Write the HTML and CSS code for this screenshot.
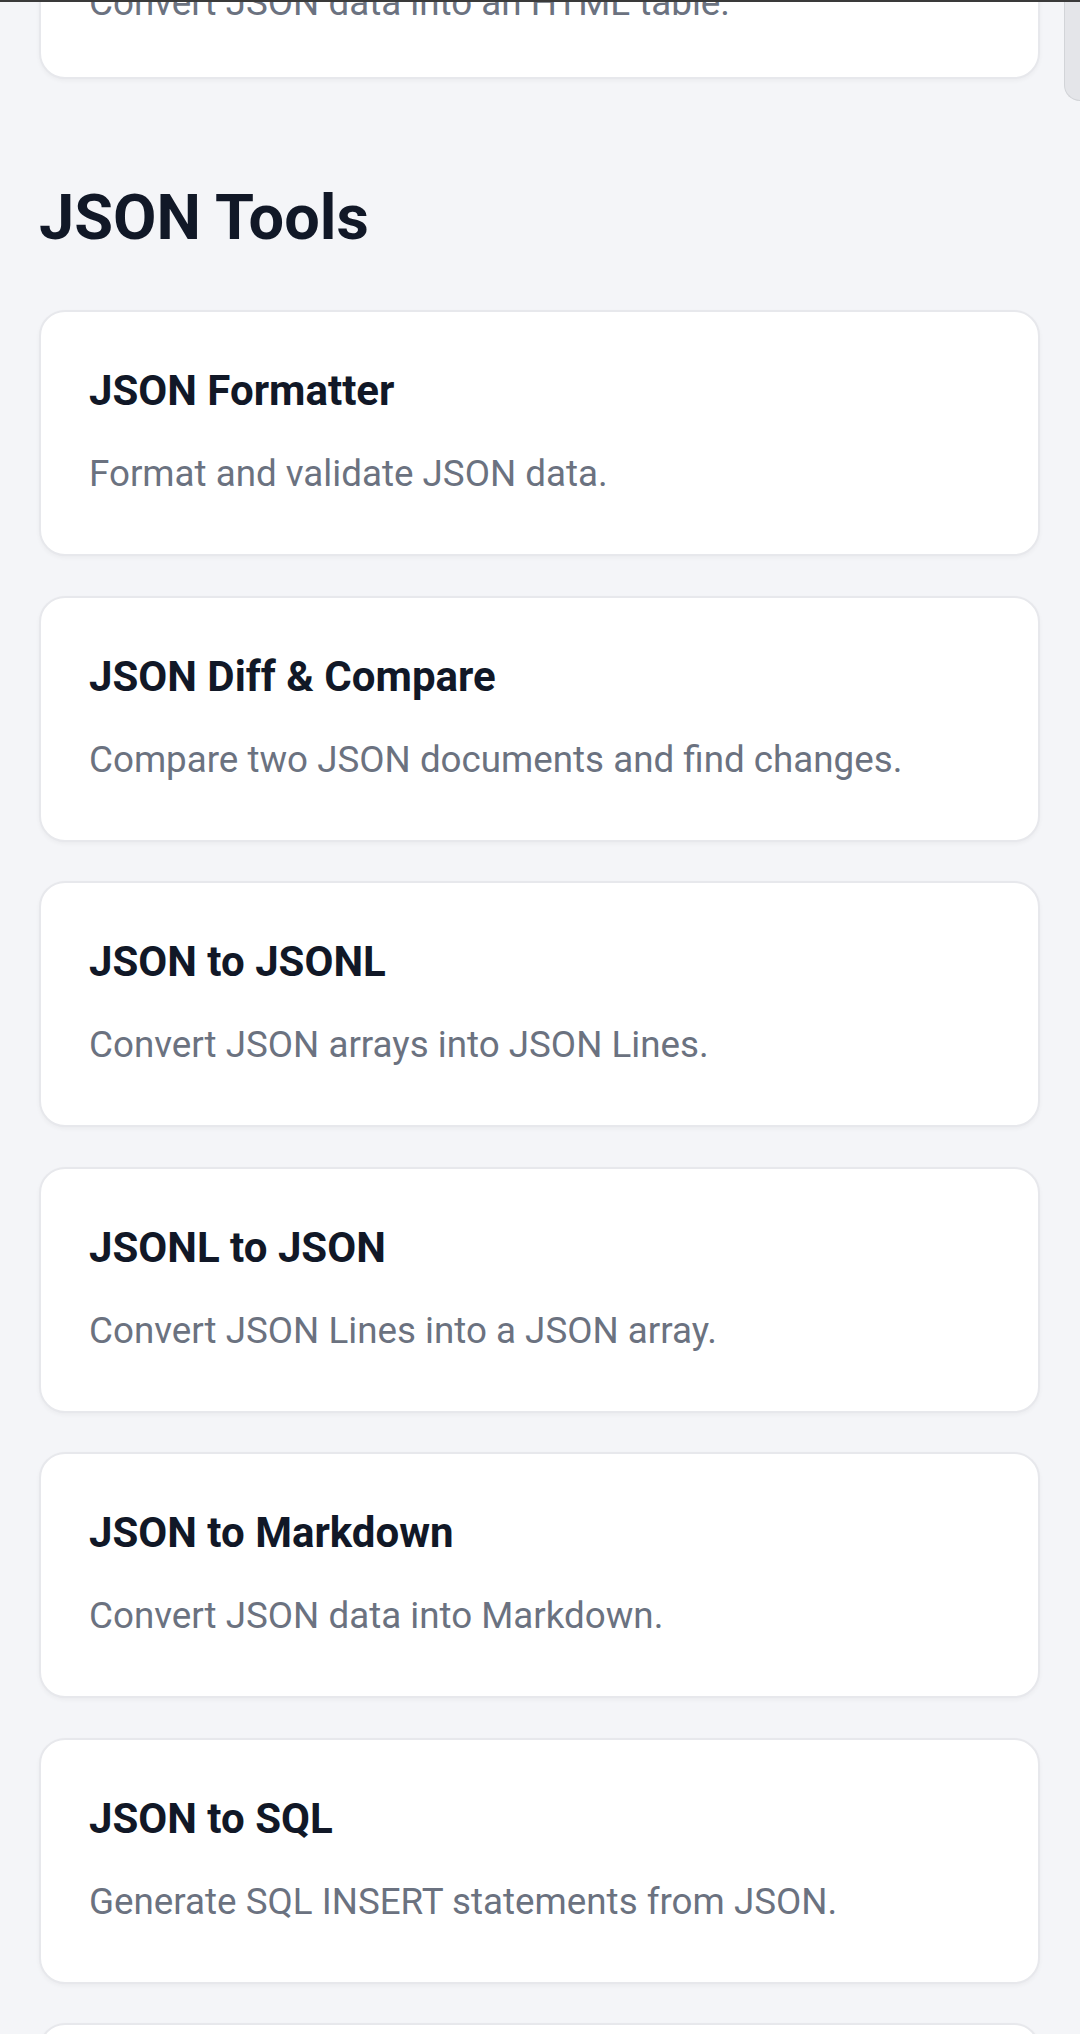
FILE: index.html
```html
<!DOCTYPE html>
<html>
<head>
  <title>JSON Tools</title>
  <link rel="stylesheet" href="styles.css">
</head>
<body>
  <div class="top-edge"></div>
  <div class="scroll-tab"></div>

  <div class="page">
    <div class="tool-list prev">
      <a href="#" class="tool-card tail">
        <p class="desc">Convert JSON data into an HTML table.</p>
      </a>
    </div>

    <h2 class="section-title">JSON Tools</h2>

    <div class="tool-list">
      <a href="#" class="tool-card">
        <h3 class="name">JSON Formatter</h3>
        <p class="desc">Format and validate JSON data.</p>
      </a>
      <a href="#" class="tool-card">
        <h3 class="name">JSON Diff &amp; Compare</h3>
        <p class="desc">Compare two JSON documents and find changes.</p>
      </a>
      <a href="#" class="tool-card">
        <h3 class="name">JSON to JSONL</h3>
        <p class="desc">Convert JSON arrays into JSON Lines.</p>
      </a>
      <a href="#" class="tool-card">
        <h3 class="name">JSONL to JSON</h3>
        <p class="desc">Convert JSON Lines into a JSON array.</p>
      </a>
      <a href="#" class="tool-card">
        <h3 class="name">JSON to Markdown</h3>
        <p class="desc">Convert JSON data into Markdown.</p>
      </a>
      <a href="#" class="tool-card">
        <h3 class="name">JSON to SQL</h3>
        <p class="desc">Generate SQL INSERT statements from JSON.</p>
      </a>
      <a href="#" class="tool-card empty"></a>
    </div>
  </div>
</body>
</html>
```

FILE: styles.css
```css
body {
  margin: 0;
  background-color: #f4f5f8;
  font-family: Roboto, "Noto Sans", "Liberation Sans", sans-serif;
  color: #111827;
  overflow: hidden;
}

.top-edge {
  position: fixed;
  top: 0;
  left: 0;
  right: 0;
  height: 2px;
  background-color: #3a3a3a;
  z-index: 2;
}

.scroll-tab {
  position: fixed;
  top: 0;
  right: 0;
  width: 15px;
  height: 100px;
  background-color: #e4e5e9;
  border: 1px solid #d2d4d8;
  border-right: none;
  border-top: none;
  border-bottom-left-radius: 16px;
  z-index: 1;
}

.page {
  padding: 0 40px 0 39px;
}

.tool-list {
  display: flex;
  flex-direction: column;
  gap: 39.5px;
}

.tool-list.prev {
  margin-top: -75px;
}

.tool-card {
  display: block;
  background-color: #fff;
  border: 2px solid #e7e8ec;
  border-radius: 26px;
  padding: 51px 47px 54px 48px;
  box-shadow: 0 2px 4px rgba(0, 0, 0, 0.04);
  text-decoration: none;
}

.tool-card.tail {
  padding-top: 50px;
  padding-bottom: 48px;
}

.tool-card.empty {
  height: 200px;
}

.name {
  margin: 0;
  font-size: 42px;
  line-height: 56px;
  font-weight: 700;
  color: #111827;
}

.desc {
  margin: 29px 0 0;
  font-size: 36.75px;
  line-height: 52px;
  color: #6b7280;
}

.tail .desc {
  margin-top: 0;
}

.section-title {
  margin: 97px 0 50px;
  font-size: 63px;
  line-height: 84px;
  font-weight: 700;
  color: #111827;
}
```
